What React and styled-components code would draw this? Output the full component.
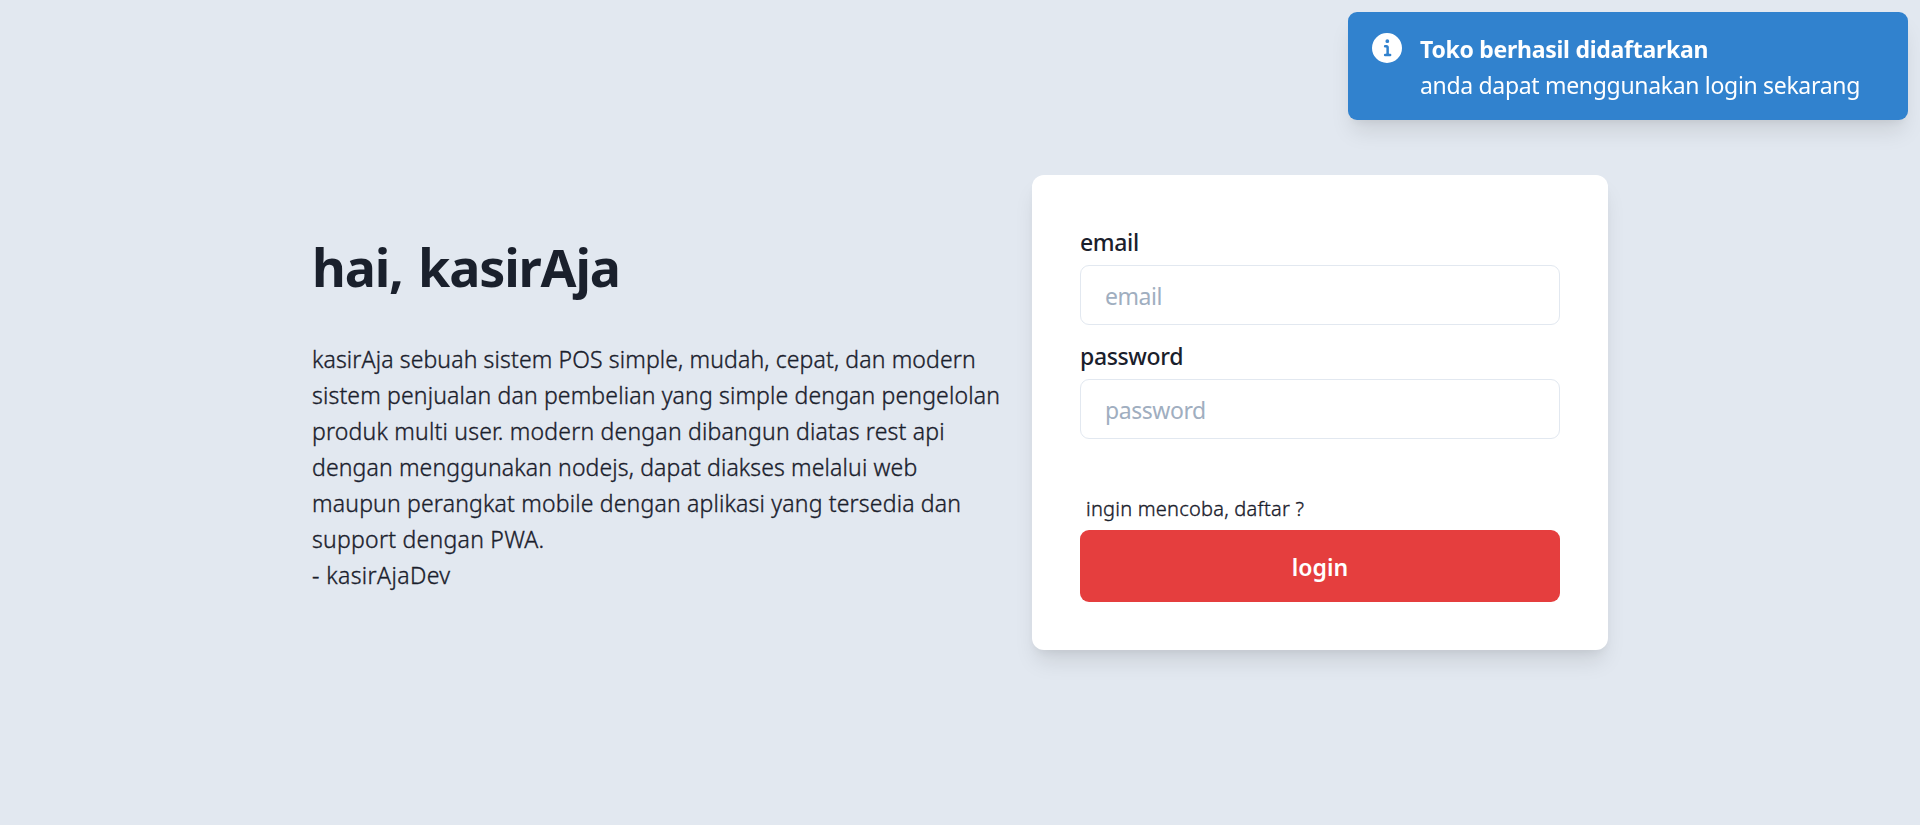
import React from 'react';
import styled, { createGlobalStyle, css } from 'styled-components';

const GlobalStyle = createGlobalStyle`
  *, *::before, *::after { box-sizing: border-box; }
  body {
    margin: 0;
    background: #e2e8f0;
    color: #1a202c;
    font-family: "Noto Sans", "Open Sans", sans-serif;
    font-size: 23px;
    line-height: 36px;
  }
`;

const bookWeight = css`
  font-weight: 300;
  -webkit-text-stroke: 0.35px currentColor;
`;

const Page = styled.main`
  min-height: 825px;
  display: flex;
  align-items: center;
  justify-content: center;
`;

const Content = styled.div`
  width: 1296px;
  display: flex;
  align-items: center;
  gap: 24px;
`;

const Intro = styled.section`
  width: 696px;
`;

const Heading = styled.h1`
  margin: 0 0 42px;
  padding-top: 2px;
  font-size: 52px;
  line-height: 63px;
  font-weight: 700;
  letter-spacing: -1.15px;
  word-spacing: 3px;
`;

const Description = styled.p`
  margin: 0;
  padding-top: 1px;
  ${bookWeight}
`;

const Line = styled.span`
  display: block;
  white-space: nowrap;
  letter-spacing: ${(p) => p.$tracking}px;
`;

const Card = styled.form`
  width: 576px;
  padding: 48px;
  background: #fff;
  border-radius: 12px;
  box-shadow: 0 15px 22.5px -4.5px rgba(0, 0, 0, 0.1), 0 6px 9px -3px rgba(0, 0, 0, 0.05);
`;

const Field = styled.div`
  margin-bottom: 12px;
`;

const Label = styled.label`
  display: block;
  height: 36px;
  padding-top: 1px;
  margin-bottom: 6px;
  font-weight: 500;
  letter-spacing: -0.35px;
`;

const Input = styled.input`
  display: block;
  width: 100%;
  height: 60px;
  padding: 2px 24px 0;
  border: 1px solid #e2e8f0;
  border-radius: 9px;
  background: #fff;
  color: inherit;
  font: inherit;
  letter-spacing: -0.45px;
  outline: none;

  &::placeholder {
    color: #a0aec0;
    opacity: 1;
  }
`;

const RegisterLink = styled.a`
  display: block;
  margin-top: 54px;
  height: 37px;
  padding: 0 6px;
  font-size: 20px;
  line-height: 32px;
  letter-spacing: 0.23px;
  ${bookWeight}
`;

const LoginButton = styled.button`
  display: block;
  width: 100%;
  height: 72px;
  padding: 2px 0 0;
  border: 0;
  border-radius: 9px;
  background: #e53e3e;
  color: #fff;
  font: inherit;
  font-weight: 600;
`;

const Toast = styled.div`
  position: fixed;
  top: 12px;
  right: 12px;
  width: 560px;
  display: flex;
  align-items: flex-start;
  padding: 18px 48px 18px 24px;
  border-radius: 9px;
  background: #3182ce;
  color: #fff;
  box-shadow: 0 15px 22.5px -4.5px rgba(0, 0, 0, 0.1), 0 6px 9px -3px rgba(0, 0, 0, 0.05);
`;

const ToastIcon = styled.svg`
  flex: none;
  width: 30px;
  height: 36px;
  margin-right: 18px;
  fill: currentColor;
`;

const ToastTitle = styled.div`
  padding-top: 1px;
  height: 36px;
  font-weight: 700;
  letter-spacing: -0.27px;
  white-space: nowrap;
`;

const ToastText = styled.div`
  padding-top: 1px;
  height: 36px;
  letter-spacing: -0.32px;
  white-space: nowrap;
`;

const LINES = [
  ['kasirAja sebuah sistem POS simple, mudah, cepat, dan modern', 0.13],
  ['sistem penjualan dan pembelian yang simple dengan pengelolan', 0.15],
  ['produk multi user. modern dengan dibangun diatas rest api', 0.21],
  ['dengan menggunakan nodejs, dapat diakses melalui web', 0.13],
  ['maupun perangkat mobile dengan aplikasi yang tersedia dan', 0.18],
  ['support dengan PWA.', 0.26],
  ['- kasirAjaDev', 0.4],
];

export default function App() {
  return (
    <>
      <GlobalStyle />
      <Page>
        <Content>
          <Intro>
            <Heading>hai, kasirAja</Heading>
            <Description>
              {LINES.map(([text, tracking]) => (
                <Line key={text} $tracking={tracking}>{text}</Line>
              ))}
            </Description>
          </Intro>
          <Card>
            <Field>
              <Label htmlFor="email">email</Label>
              <Input id="email" type="email" placeholder="email" />
            </Field>
            <Field>
              <Label htmlFor="password">password</Label>
              <Input id="password" type="password" placeholder="password" />
            </Field>
            <RegisterLink>ingin mencoba, daftar ?</RegisterLink>
            <LoginButton type="button">login</LoginButton>
          </Card>
        </Content>
      </Page>
      <Toast role="alert">
        <ToastIcon viewBox="0 0 24 24">
          <path d="M12,0A12,12,0,1,0,24,12,12.013,12.013,0,0,0,12,0Zm.25,5a1.5,1.5,0,1,1-1.5,1.5A1.5,1.5,0,0,1,12.25,5ZM14.5,18.5h-4a1,1,0,0,1,0-2h.75a.25.25,0,0,0,.25-.25v-4.5a.25.25,0,0,0-.25-.25H10.5a1,1,0,0,1,0-2h1a2,2,0,0,1,2,2v4.75a.25.25,0,0,0,.25.25h.75a1,1,0,1,1,0,2Z" />
        </ToastIcon>
        <div>
          <ToastTitle>Toko berhasil didaftarkan</ToastTitle>
          <ToastText>anda dapat menggunakan login sekarang</ToastText>
        </div>
      </Toast>
    </>
  );
}
